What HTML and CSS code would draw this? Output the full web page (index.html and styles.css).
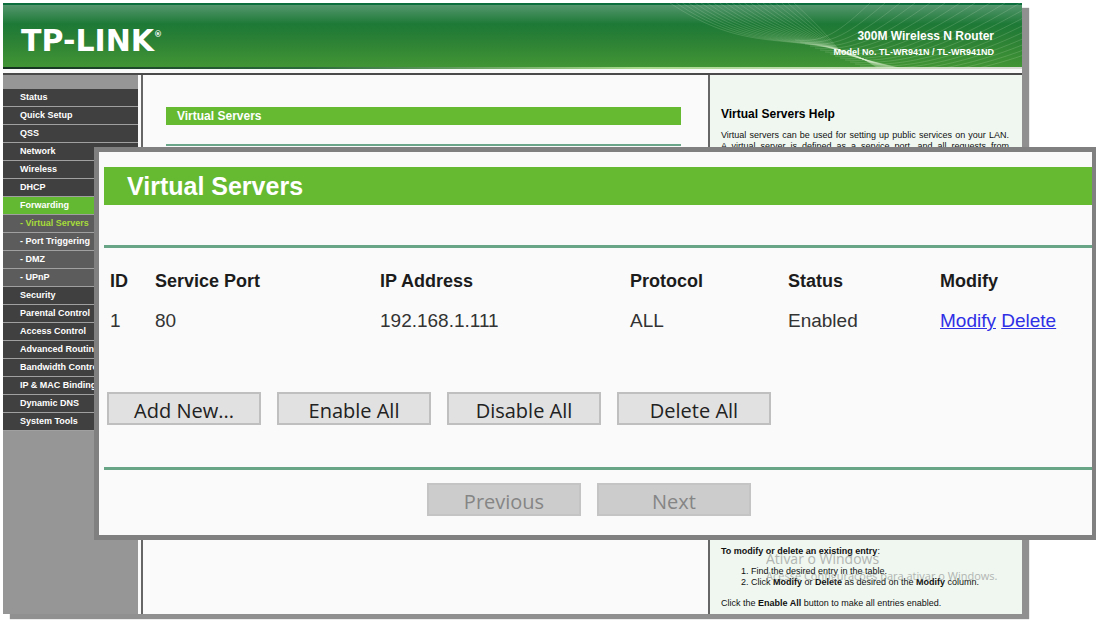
FILE: index.html
```html
<!DOCTYPE html>
<html lang="en">
<head>
<meta charset="utf-8">
<title>TP-LINK - Virtual Servers</title>
<link rel="stylesheet" href="styles.css">
</head>
<body>
<div class="page">
  <header class="banner">
    <div class="logo">TP-LINK<sup>®</sup></div>
    <svg class="waves" viewBox="0 0 362 65" aria-hidden="true"></svg>
    <div class="model">
      <div class="model-name">300M Wireless N Router</div>
      <div class="model-no">Model No. TL-WR941N / TL-WR941ND</div>
    </div>
  </header>
  <div class="banner-edge"></div>
  <div class="columns">
    <nav class="menu">
      <a href="#">Status</a>
      <a href="#">Quick Setup</a>
      <a href="#">QSS</a>
      <a href="#">Network</a>
      <a href="#">Wireless</a>
      <a href="#">DHCP</a>
      <a href="#" class="active">Forwarding</a>
      <a href="#" class="sub current">- Virtual Servers</a>
      <a href="#" class="sub">- Port Triggering</a>
      <a href="#" class="sub">- DMZ</a>
      <a href="#" class="sub">- UPnP</a>
      <a href="#">Security</a>
      <a href="#">Parental Control</a>
      <a href="#">Access Control</a>
      <a href="#">Advanced Routing</a>
      <a href="#">Bandwidth Control</a>
      <a href="#">IP &amp; MAC Binding</a>
      <a href="#">Dynamic DNS</a>
      <a href="#">System Tools</a>
    </nav>
    <main class="content">
      <h1 class="content-title">Virtual Servers</h1>
      <hr class="content-rule">
    </main>
    <aside class="help">
      <section>
        <h2 class="help-title">Virtual Servers Help</h2>
        <p class="help-intro">Virtual servers can be used for setting up public services on your LAN.<br>A virtual server is defined as a service port, and all requests from</p>
      </section>
      <section>
        <p><b>To modify or delete an existing entry</b>:</p>
        <ol class="steps">
          <li>Find the desired entry in the table.</li>
          <li>Click <b>Modify</b> or <b>Delete</b> as desired on the <b>Modify</b> column.</li>
        </ol>
        <p>Click the <b>Enable All</b> button to make all entries enabled.</p>
      </section>
    </aside>
  </div>
</div>

<div class="watermark">
  <div class="watermark-title">Ativar o Windows</div>
  <div class="watermark-text">Acesse Configurações para ativar o Windows.</div>
</div>

<section class="panel">
  <h2 class="panel-title">Virtual Servers</h2>
  <hr class="rule">
  <table class="servers">
    <colgroup>
      <col class="col-id"><col class="col-port"><col class="col-ip"><col class="col-protocol"><col class="col-status"><col>
    </colgroup>
    <thead>
      <tr><th>ID</th><th>Service Port</th><th>IP Address</th><th>Protocol</th><th>Status</th><th>Modify</th></tr>
    </thead>
    <tbody>
      <tr><td>1</td><td>80</td><td>192.168.1.111</td><td>ALL</td><td>Enabled</td><td><a href="#">Modify</a> <a href="#">Delete</a></td></tr>
    </tbody>
  </table>
  <div class="buttons">
    <button type="button">Add New...</button>
    <button type="button">Enable All</button>
    <button type="button">Disable All</button>
    <button type="button">Delete All</button>
  </div>
  <hr class="rule">
  <div class="buttons pager">
    <button type="button" disabled>Previous</button>
    <button type="button" disabled>Next</button>
  </div>
</section>
<script src="waves.js"></script>
</body>
</html>
```
FILE: styles.css
```css
* { box-sizing: border-box; }

body {
  margin: 0;
  padding: 3px 74px 6px 3px;
  height: 100vh;
  position: relative;
  overflow: hidden;
  background: #fff;
  font-family: "Liberation Sans", Arial, sans-serif;
  font-size: 9px;
  color: #111;
}

h1, h2, p, hr { margin: 0; }
hr { border: 0; }

.page {
  height: 100%;
  display: flex;
  flex-direction: column;
  background: #fafafa;
  box-shadow: 7px 5px 1px #909090;
}

/* Banner */
.banner {
  height: 64px;
  display: flex;
  align-items: center;
  justify-content: space-between;
  padding: 0 28px 0 18px;
  position: relative;
  color: #fff;
  border-top: 2px solid #0b6e3c;
  background: linear-gradient(#55966e 0, #1d7936 19px, #2a8035 34px, #429534 62px);
}

.logo {
  font-family: "DejaVu Sans", sans-serif;
  font-weight: bold;
  font-size: 30px;
  line-height: 32px;
  padding-top: 10px;
}
.logo sup { font-size: 8px; line-height: 8px; vertical-align: 14px; }

.waves {
  position: absolute;
  right: 0;
  top: -2px;
  width: 362px;
  height: 65px;
  fill: none;
  stroke: #dff5d8;
  stroke-opacity: .17;
}

.model { position: relative; text-align: right; font-weight: bold; padding-top: 16px; }
.model-name { font-size: 12px; line-height: 16px; }
.model-no { font-size: 9px; line-height: 16px; }

.banner-edge {
  height: 6px;
  border-top: 2px solid;
  border-image: linear-gradient(90deg, #14301f 0, #2c6b3b 30%, #a8d98c 62%, #d9dcd6 100%) 1;
  background: #fafafa;
}

/* Columns */
.columns {
  flex: 1;
  min-height: 0;
  display: grid;
  grid-template-columns: 135px 1fr 314px;
  border-top: 2px solid #4a4a4a;
}

.menu {
  background: #969696;
  padding-top: 14px;
}
.menu a {
  display: block;
  height: 18px;
  padding-left: 17px;
  line-height: 16px;
  font-weight: bold;
  color: #fff;
  text-decoration: none;
  white-space: nowrap;
  background: #404040;
  border-bottom: 1px solid #a0a0a0;
}
.menu .active { background: #63b931; }
.menu .sub { background: #5c5c5c; }
.menu .current { color: #a6dc3a; }

.content {
  margin-left: 3px;
  padding: 32px 27px 0 23px;
  border-left: 2px solid #666;
}
.content-title {
  padding-left: 11px;
  font-size: 12px;
  line-height: 18px;
  color: #fff;
  background: #66ba32;
}
.content-rule { height: 2px; margin-top: 19px; background: #6ba58a; }

.help {
  display: flex;
  flex-direction: column;
  justify-content: space-between;
  padding: 31px 13px 5px 11px;
  border-left: 2px solid #666;
  background: #eff7f0;
  line-height: 11px;
}
.help-title { font-size: 12px; line-height: 16px; color: #000; margin-bottom: 8px; }
.help-intro { text-align: justify; text-align-last: justify; }
.steps { margin: 9px 0 10px; padding-left: 30px; }

/* Activation notice */
.watermark {
  position: absolute;
  left: 766px;
  top: 549px;
  font-family: "Open Sans", sans-serif;
  color: #8a8a8a;
  opacity: .6;
}
.watermark-title { font-size: 14px; line-height: 20px; }
.watermark-text { font-size: 11px; line-height: 14px; }

/* Enlarged table panel */
.panel {
  position: absolute;
  top: 147px;
  left: 94px;
  right: 0;
  padding: 15px 0 19px 5px;
  border: 5px solid #808080;
  border-right-width: 4px;
  background: #fafafa;
}
.panel-title {
  padding-left: 23px;
  font-size: 25px;
  line-height: 38px;
  color: #fff;
  background: #66ba32;
}
.rule { height: 3px; background: #68a586; }
.panel-title + .rule { margin-top: 40px; }

.servers {
  width: 100%;
  margin-top: 13px;
  table-layout: fixed;
  border-collapse: collapse;
  font-size: 19px;
  line-height: 40px;
  text-align: left;
  color: #333;
}
.servers th { font-size: 18px; color: #1c1c1c; }
.servers th, .servers td { padding: 0 0 0 6px; }
.servers a { color: #2f2fe6; }
.col-id { width: 45px; }
.col-port { width: 225px; }
.col-ip { width: 250px; }
.col-protocol { width: 158px; }
.col-status { width: 152px; }

.buttons {
  display: flex;
  gap: 16px;
  margin: 51px 0 42px;
  padding-left: 3px;
}
.buttons button {
  width: 154px;
  height: 33px;
  padding: 4px 0 0;
  font-family: "Open Sans", sans-serif;
  font-size: 20px;
  line-height: 24px;
  color: #222;
  background: #e1e1e1;
  border: 2px solid #bfbfbf;
}
.buttons button:disabled {
  color: #858585;
  background: #cccccc;
  border-color: #c4c4c4;
}
.pager {
  justify-content: center;
  margin: 13px 0 0;
  padding: 0 18px 0 0;
}
```
FILE: waves.js
```javascript
// Draws the two fans of fine lines on the right of the banner.
const svg = document.querySelector('.waves');

function addCurve(d) {
  const path = document.createElementNS('http://www.w3.org/2000/svg', 'path');
  path.setAttribute('d', d);
  svg.appendChild(path);
}

const mix = (a, b, t) => a + (b - a) * t;

for (let i = 0; i <= 20; i++) {
  const t = i / 20;
  addCurve(`M${mix(10, 134, t)} 0 C${mix(85, 155, t)} ${mix(50, 19, t)} ${mix(125, 170, t)} ${mix(30, 36, t)} ${mix(190, 182, t)} 50 Q${mix(205, 200, t)} 56 ${mix(218, 240, t)} 65`);
}

for (let i = 0; i <= 18; i++) {
  addCurve(`M${135 + i * 5} ${37 + i * 2} C${165 + i * 7} ${40 + i * 2} ${180 + i * 10} ${28 + i * 2} ${210 + i * 15} 0`);
}
```
